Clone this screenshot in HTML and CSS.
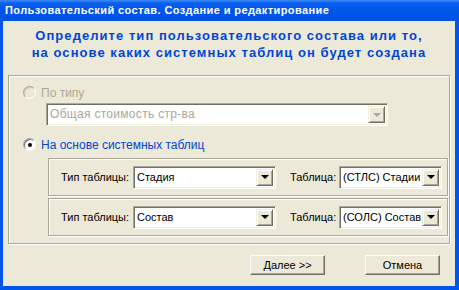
FILE: index.html
```html
<!DOCTYPE html>
<html lang="ru">
<head>
  <meta charset="UTF-8">
  <title>Пользовательский состав</title>
  <link rel="stylesheet" href="styles.css">
</head>
<body>
  <div class="window">
    <div class="titlebar">Пользовательский состав. Создание и редактирование</div>
    <div class="client">
      <div class="heading">
        Определите тип пользовательского состава или то,<br>
        на основе каких системных таблиц он будет создана
      </div>

      <div class="group">
        <div class="option disabled">
          <span class="radio"></span>
          <span class="option-label">По типу</span>
        </div>
        <div class="combo combo-wide disabled">
          <span class="combo-text">Общая стоимость стр-ва</span>
          <span class="combo-btn"><span class="arrow"></span></span>
        </div>

        <div class="option">
          <span class="radio checked"></span>
          <span class="option-label">На основе системных таблиц</span>
        </div>

        <div class="subgroup">
          <span class="label label-type">Тип таблицы:</span>
          <div class="combo combo-type">
            <span class="combo-text">Стадия</span>
            <span class="combo-btn"><span class="arrow"></span></span>
          </div>
          <span class="label label-table">Таблица:</span>
          <div class="combo combo-table">
            <span class="combo-text">(СТЛС) Стадии ,</span>
            <span class="combo-btn"><span class="arrow"></span></span>
          </div>
        </div>

        <div class="subgroup">
          <span class="label label-type">Тип таблицы:</span>
          <div class="combo combo-type">
            <span class="combo-text">Состав</span>
            <span class="combo-btn"><span class="arrow"></span></span>
          </div>
          <span class="label label-table">Таблица:</span>
          <div class="combo combo-table">
            <span class="combo-text">(СОЛС) Состав</span>
            <span class="combo-btn"><span class="arrow"></span></span>
          </div>
        </div>
      </div>

      <div class="buttons">
        <button class="btn">Далее &gt;&gt;</button>
        <button class="btn">Отмена</button>
      </div>
    </div>
  </div>
</body>
</html>
```

FILE: styles.css
```css
/* Window frame */
body {
  margin: 0;
  font-family: 'Liberation Sans', Arial, sans-serif;
  font-size: 11px;
  letter-spacing: 0;
  color: #000;
}

.window {
  width: 459px;
  height: 290px;
  display: flex;
  flex-direction: column;
  background: #0055ea;
}

.titlebar {
  height: 21px;
  line-height: 21px;
  padding-left: 5px;
  color: #fff;
  font-weight: bold;
  font-size: 11px;
  letter-spacing: 0.4px;
  background: linear-gradient(to bottom, #3d8cf8 0, #0a5ff0 3px, #0055ea 50%, #0052e4 100%);
}

.client {
  flex: 1;
  margin: 0 4px 4px 3px;
  background: #ece9d8;
  display: flex;
  flex-direction: column;
}

/* Heading */
.heading {
  margin-top: 6px;
  text-align: center;
  color: #0046d5;
  font-weight: bold;
  font-size: 13px;
  line-height: 17px;
  letter-spacing: 1.05px;
}

/* Etched group boxes */
.group {
  margin: 14px 5px 0 5px;
  padding: 10px 1px 7px 14px;
  border: 1px solid #aca899;
  box-shadow: 1px 1px 0 #fff, inset 1px 1px 0 #fff;
}

.option {
  display: flex;
  align-items: center;
  height: 13px;
  color: #0046d5;
  font-size: 12px;
}

.option + .combo {
  margin-top: 4px;
}

.combo + .option {
  margin-top: 12px;
}

.option.disabled {
  color: #aca899;
}

.option-label {
  margin-left: 5px;
}

.radio {
  width: 11px;
  height: 11px;
  border-radius: 50%;
  border: 1px solid;
  border-color: #aca899 #fff #fff #aca899;
  box-shadow: inset 1px 1px 0 #716f64;
  background: #fff;
  position: relative;
}

.option.disabled .radio {
  background: #ece9d8;
  border-color: #aca899 #fff #fff #aca899;
  box-shadow: inset 1px 1px 0 #ccc9b8;
}

.radio.checked:after {
  content: '';
  position: absolute;
  left: 4px;
  top: 4px;
  width: 4px;
  height: 4px;
  border-radius: 50%;
  background: #000;
}

/* Combo boxes */
.combo {
  display: flex;
  align-items: stretch;
  height: 17px;
  border: 1px solid;
  border-color: #aca899 #fff #fff #aca899;
  box-shadow: inset 1px 1px 0 #716f64, inset -1px -1px 0 #f1efe2;
  padding: 2px;
  background: #fff;
}

.combo-wide {
  width: 336px;
  margin-left: 23px;
}

.combo-text {
  flex: 1;
  overflow: hidden;
  white-space: nowrap;
  line-height: 17px;
  padding-left: 1px;
}

.combo.disabled .combo-text {
  color: #aca899;
  font-size: 12px;
  letter-spacing: 0.3px;
}

.combo-btn {
  width: 15px;
  flex: none;
  background: #ece9d8;
  border: 1px solid;
  border-color: #f1efe2 #716f64 #716f64 #f1efe2;
  box-shadow: inset 1px 1px 0 #fff, inset -1px -1px 0 #aca899;
  display: flex;
  align-items: center;
  justify-content: center;
}

.arrow {
  width: 0;
  height: 0;
  border-left: 4px solid transparent;
  border-right: 4px solid transparent;
  border-top: 4px solid #000;
}

.combo.disabled .arrow {
  border-top-color: #aca899;
}

/* Sub groups with table pickers */
.subgroup {
  display: flex;
  align-items: center;
  height: 36px;
  margin: 0 0 0 25px;
  padding: 0 5px 0 12px;
  border: 1px solid #aca899;
  box-shadow: 1px 1px 0 #fff, inset 1px 1px 0 #fff;
}

.option + .subgroup {
  margin-top: 7px;
}

.subgroup + .subgroup {
  margin-top: 2px;
}

.label-type {
  width: 72px;
}

.combo-type {
  width: 137px;
}

.label-table {
  width: 49px;
  margin-left: 14px;
}

.combo-table {
  width: 97px;
}

/* Buttons */
.buttons {
  display: flex;
  justify-content: flex-end;
  gap: 40px;
  margin: 11px 15px 0 0;
}

.btn {
  width: 75px;
  height: 20px;
  padding: 0;
  font-family: 'Liberation Sans', Arial, sans-serif;
  font-size: 11px;
  color: #000;
  background: #ece9d8;
  border: 1px solid;
  border-color: #fff #716f64 #716f64 #fff;
  box-shadow: inset -1px -1px 0 #aca899;
}
```
